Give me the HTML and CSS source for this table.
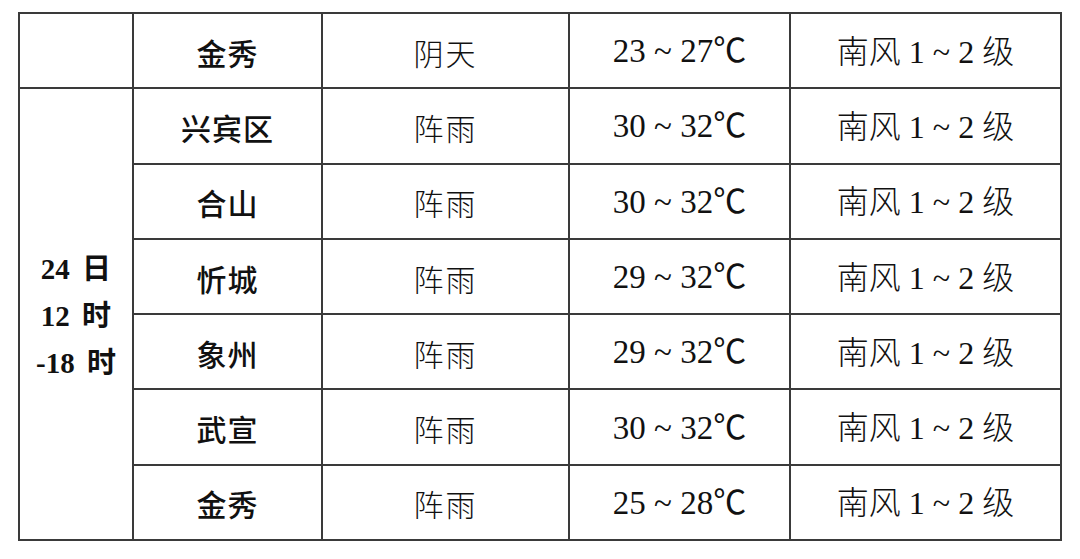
FILE: index.html
```html
<!DOCTYPE html>
<html lang="zh-CN">
<head>
<meta charset="utf-8">
<link rel="stylesheet" href="styles.css">
</head>
<body>
<table class="forecast">
  <colgroup>
    <col class="c-time">
    <col class="c-city">
    <col class="c-wx">
    <col class="c-temp">
    <col class="c-wind">
  </colgroup>
  <tbody>
    <tr>
      <td class="blank"></td>
      <td class="city">金秀</td>
      <td class="wx">阴天</td>
      <td class="temp">23 ~ 27℃</td>
      <td class="wind">南风 1 ~ 2 级</td>
    </tr>
    <tr>
      <td class="time" rowspan="6"><span class="line">24 日</span><span class="line">12 时</span><span class="line">-18 时</span></td>
      <td class="city">兴宾区</td>
      <td class="wx">阵雨</td>
      <td class="temp">30 ~ 32℃</td>
      <td class="wind">南风 1 ~ 2 级</td>
    </tr>
    <tr>
      <td class="city">合山</td>
      <td class="wx">阵雨</td>
      <td class="temp">30 ~ 32℃</td>
      <td class="wind">南风 1 ~ 2 级</td>
    </tr>
    <tr>
      <td class="city">忻城</td>
      <td class="wx">阵雨</td>
      <td class="temp">29 ~ 32℃</td>
      <td class="wind">南风 1 ~ 2 级</td>
    </tr>
    <tr>
      <td class="city">象州</td>
      <td class="wx">阵雨</td>
      <td class="temp">29 ~ 32℃</td>
      <td class="wind">南风 1 ~ 2 级</td>
    </tr>
    <tr>
      <td class="city">武宣</td>
      <td class="wx">阵雨</td>
      <td class="temp">30 ~ 32℃</td>
      <td class="wind">南风 1 ~ 2 级</td>
    </tr>
    <tr>
      <td class="city">金秀</td>
      <td class="wx">阵雨</td>
      <td class="temp">25 ~ 28℃</td>
      <td class="wind">南风 1 ~ 2 级</td>
    </tr>
  </tbody>
</table>
</body>
</html>
```

FILE: styles.css
```css
html, body {
  margin: 0;
  padding: 0;
  background: #ffffff;
}

body {
  padding: 12px 0 0 18px;
  font-family: "Liberation Serif", "Noto Sans CJK SC", serif;
  color: #111;
}

.forecast {
  border-collapse: collapse;
  table-layout: fixed;
  width: 1042px;
}

.c-time { width: 114px; }
.c-city { width: 189px; }
.c-wx { width: 247px; }
.c-temp { width: 221px; }
.c-wind { width: 271px; }

.forecast td {
  border: 2px solid #3a3a3a;
  height: 71.3px;
  padding: 2px 0 0 0;
  text-align: center;
  vertical-align: middle;
  font-size: 30px;
  line-height: 1;
}

.forecast td.city {
  font-family: "Noto Sans CJK SC", sans-serif;
  font-weight: 500;
  letter-spacing: 1px;
}

.forecast td.wx {
  font-family: "Noto Sans CJK SC", sans-serif;
  font-weight: 300;
  letter-spacing: 2px;
}

.forecast td.temp {
  font-family: "Liberation Serif", "Noto Sans CJK SC", serif;
  font-size: 33px;
  letter-spacing: 0;
  font-weight: 400;
}

.forecast td.wind {
  font-family: "Liberation Serif", "Noto Sans CJK SC", serif;
  font-size: 32px;
  font-weight: 300;
  letter-spacing: 0;
}

.forecast td.time {
  font-size: 29px;
  font-weight: 700;
  line-height: 47px;
  word-spacing: 5px;
  padding-top: 4px;
}

.time .line {
  display: block;
  white-space: nowrap;
}
```
